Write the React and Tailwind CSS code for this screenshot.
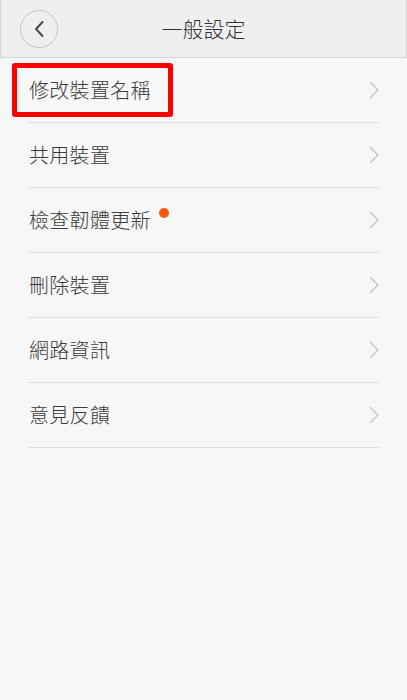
const font = { fontFamily: '"Noto Sans CJK TC", "Noto Sans", sans-serif' };

function Chevron() {
	return (
		<svg width="10" height="18" viewBox="0 0 10 18" fill="none" className="shrink-0">
			<path d="M1 1l8 8-8 8" stroke="#c4c4c4" strokeWidth="1.3" strokeLinejoin="miter" />
		</svg>
	);
}

const items = [
	{ label: "修改裝置名稱", boxed: true },
	{ label: "共用裝置" },
	{ label: "檢查韌體更新", dot: true },
	{ label: "刪除裝置" },
	{ label: "網路資訊" },
	{ label: "意見反饋" },
];

export default function App() {
	return (
		<div className="w-[407px] h-[700px] bg-[#f7f7f7] text-[#3a3a3a]" style={font}>
			<div className="h-[58px] bg-[#efeff1] border-x border-b border-[#d6d6d8] flex items-center relative">
				<button className="ml-[19px] w-[38px] h-[38px] rounded-full border border-[#c6c6c6] flex items-center justify-center">
					<svg width="12" height="18" viewBox="0 0 12 18" fill="none">
						<path d="M9.5 2L3 9l6.5 7" stroke="#4a4a4a" strokeWidth="2" strokeLinecap="round" strokeLinejoin="round" />
					</svg>
				</button>
				<h1 className="absolute left-0 right-0 text-center text-[21px] font-light leading-none text-[#333] pointer-events-none">一般設定</h1>
			</div>
			<ul className="pl-[28px] pr-[28px]">
				{items.map((item) => (
					<li key={item.label} className="h-[65px] border-b border-[#dddddd] flex items-center justify-between relative">
						<span className="relative text-[20px] font-light tracking-[0.3px] leading-none pl-px">
							{item.label}
							{item.dot && <span className="absolute -right-[18px] -top-[2px] w-[10px] h-[10px] rounded-full bg-[#f55a0f]" />}
						</span>
						<Chevron />
						{item.boxed && (
							<div className="absolute left-[-16px] top-[5px] w-[161px] h-[54px] border-[5px] border-[#ff0000] rounded-[3px]" />
						)}
					</li>
				))}
			</ul>
		</div>
	);
}
